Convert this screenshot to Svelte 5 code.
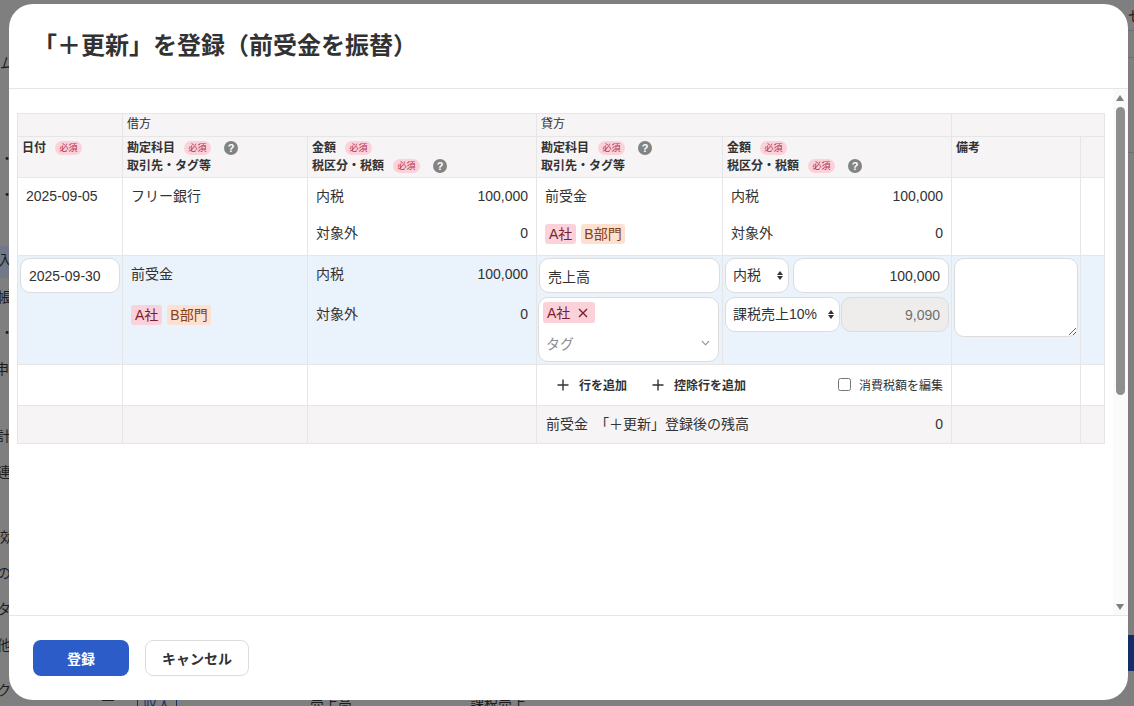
<script>
  const bgBits = [
    { t: 'ム', x: 0, y: 53 }, { t: '・', x: 0, y: 148 }, { t: '・', x: 0, y: 184 },
    { t: '入', x: -2, y: 250 }, { t: '帳', x: -3, y: 287 }, { t: '・', x: 0, y: 322 },
    { t: '申', x: -5, y: 359 }, { t: '計', x: -3, y: 426 }, { t: '連', x: -3, y: 462 },
    { t: '効', x: 0, y: 527 }, { t: 'の', x: -3, y: 563 }, { t: 'タ', x: -3, y: 599 },
    { t: '他', x: -3, y: 635 }, { t: 'ク', x: -3, y: 680 }, { t: 'セ', x: 1128, y: 6 }
  ];
</script>

{#snippet must()}<span class="must">必須</span>{/snippet}
{#snippet help()}<span class="help">?</span>{/snippet}

<div class="page">
  <div class="backdrop">
    <div class="bg-active"></div>
    <div class="bg-blue"></div>
    <div class="bg-rule r-a"></div>
    <div class="bg-rule r-b"></div>
    <div class="bg-rule r-c"></div>
    {#each bgBits as b}
      <span class="bg-bit" style="left:{b.x}px;top:{b.y}px">{b.t}</span>
    {/each}
    <div class="bg-bottom">
      <span class="bg-check"></span>
      <span class="bg-tab">収入</span><span class="bg-a">売上高</span><span class="bg-b">課税売上</span>
    </div>
  </div>

  <div class="modal">
    <header><h1>「＋更新」を登録（前受金を振替）</h1></header>

    <div class="body">
      <table>
        <colgroup>
          <col style="width:105px" /><col style="width:185px" /><col style="width:229px" />
          <col style="width:186px" /><col style="width:229px" /><col style="width:129px" /><col style="width:24px" />
        </colgroup>
        <thead>
          <tr class="h1">
            <th></th>
            <th colspan="2">借方</th>
            <th colspan="2">貸方</th>
            <th colspan="2"></th>
          </tr>
          <tr class="h2">
            <th><div class="hl b">日付{@render must()}</div></th>
            <th>
              <div class="hl b">勘定科目{@render must()}{@render help()}</div>
              <div class="hl b">取引先・タグ等</div>
            </th>
            <th>
              <div class="hl b">金額{@render must()}</div>
              <div class="hl b">税区分・税額{@render must()}{@render help()}</div>
            </th>
            <th>
              <div class="hl b">勘定科目{@render must()}{@render help()}</div>
              <div class="hl b">取引先・タグ等</div>
            </th>
            <th>
              <div class="hl b">金額{@render must()}</div>
              <div class="hl b">税区分・税額{@render must()}{@render help()}</div>
            </th>
            <th><div class="hl b">備考</div></th>
            <th></th>
          </tr>
        </thead>
        <tbody>
          <tr class="r1">
            <td class="pl8"><div class="line">2025-09-05</div></td>
            <td class="pl8"><div class="line">フリー銀行</div></td>
            <td class="amt">
              <div class="line sb"><span>内税</span><span>100,000</span></div>
              <div class="line sb"><span>対象外</span><span>0</span></div>
            </td>
            <td class="pl8">
              <div class="line">前受金</div>
              <div class="line"><span class="tag red">A社</span><span class="tag orange">B部門</span></div>
            </td>
            <td class="amt">
              <div class="line sb"><span>内税</span><span>100,000</span></div>
              <div class="line sb"><span>対象外</span><span>0</span></div>
            </td>
            <td></td><td></td>
          </tr>
          <tr class="r2">
            <td class="form"><input class="field date" value="2025-09-30" /></td>
            <td class="debit">
              <div class="line">前受金</div>
              <div class="line"><span class="tag red">A社</span><span class="tag orange">B部門</span></div>
            </td>
            <td class="amt debit-amt">
              <div class="line sb"><span>内税</span><span>100,000</span></div>
              <div class="line sb"><span>対象外</span><span>0</span></div>
            </td>
            <td class="form acct">
              <input class="field name" value="売上高" />
              <div class="tagbox">
                <span class="tag red big">A社<svg viewBox="0 0 10 10" width="10" height="10"><path d="M1 1l8 8M9 1l-8 8" stroke="#7a1f2e" stroke-width="1.4" fill="none" /></svg></span>
                <div class="tagrow">
                  <span class="ph">タグ</span>
                  <svg viewBox="0 0 10 6" width="9" height="6"><path d="M1 1l4 4 4-4" stroke="#8a8a8a" stroke-width="1.2" fill="none" /></svg>
                </div>
              </div>
            </td>
            <td class="form tax">
              <div class="taxrow first">
                <div class="sel s1">内税<span class="arrows"></span></div>
                <input class="field money" value="100,000" />
              </div>
              <div class="taxrow">
                <div class="sel s2">課税売上10%<span class="arrows"></span></div>
                <input class="field money ro" value="9,090" readonly />
              </div>
            </td>
            <td class="form note"><textarea></textarea></td>
            <td></td>
          </tr>
          <tr class="r3">
            <td></td><td></td><td></td>
            <td colspan="2">
              <div class="actions">
                <span class="act"><svg viewBox="0 0 12 12" width="12" height="12"><path d="M6 0.5v11M0.5 6h11" stroke="#333" stroke-width="1.4" /></svg>行を追加</span>
                <span class="act"><svg viewBox="0 0 12 12" width="12" height="12"><path d="M6 0.5v11M0.5 6h11" stroke="#333" stroke-width="1.4" /></svg>控除行を追加</span>
                <label class="edit"><input type="checkbox" />消費税額を編集</label>
              </div>
            </td>
            <td></td><td></td>
          </tr>
          <tr class="r4">
            <td></td><td></td><td></td>
            <td colspan="2"><div class="bal"><span>前受金　「＋更新」登録後の残高</span><span>0</span></div></td>
            <td></td><td></td>
          </tr>
        </tbody>
      </table>

      <div class="scroll">
        <span class="up"></span>
        <span class="thumb"></span>
        <span class="down"></span>
      </div>
    </div>

    <footer>
      <button class="primary">登録</button>
      <button class="ghost">キャンセル</button>
    </footer>
  </div>
</div>

<style>
  :global(body) { margin: 0; font-family: "Liberation Sans", "Noto Sans CJK JP", sans-serif; color: #323232; }
  .page { position: relative; width: 1134px; height: 706px; overflow: hidden; }
  .backdrop { position: absolute; inset: 0; background: #7f7f7f; }
  .bg-bit { position: absolute; font-size: 14px; line-height: 20px; color: #1c1c1c; }
  .bg-active { position: absolute; left: 0; top: 246px; width: 9px; height: 32px; background: #70788a; }
  .bg-blue { position: absolute; left: 1128px; top: 635px; width: 6px; height: 36px; background: #142c68; }
  .bg-rule { position: absolute; left: 1128px; width: 6px; height: 1px; background: #6e6e6e; }
  .r-a { top: 30px; }
  .r-b { top: 57px; }
  .r-c { top: 152px; }
  .bg-bottom { position: absolute; left: 0; top: 695px; font-size: 14px; color: #1c1c1c; }
  .bg-check { position: absolute; left: 101px; top: -6px; width: 12px; height: 10px; border: 1px solid #1c1c1c; border-radius: 2px; }
  .bg-tab { position: absolute; left: 137px; top: -2px; box-sizing: border-box; width: 40px; height: 16px; border-left: 1px solid #16306e; border-right: 1px solid #16306e; text-align: center; color: #16306e; white-space: nowrap; }
  .bg-a { position: absolute; left: 310px; top: -3px; white-space: nowrap; }
  .bg-b { position: absolute; left: 470px; top: -3px; white-space: nowrap; }

  .modal { position: absolute; left: 9px; top: 4px; width: 1119px; height: 696px; background: #fff; border-radius: 24px; display: flex; flex-direction: column; overflow: hidden; }
  header { height: 85px; box-sizing: border-box; border-bottom: 1px solid #e6e6e6; padding: 27px 0 0 24px; flex: none; }
  h1 { margin: 0; font-size: 24px; line-height: 30px; font-weight: 700; color: #323232; }

  .body { position: relative; flex: 1; padding: 24px 0 0 8px; min-height: 0; }
  table { border-collapse: collapse; table-layout: fixed; width: 1087px; font-size: 14px; }
  th, td { box-sizing: border-box; border: 1px solid #e6e6e6; padding: 0; vertical-align: top; text-align: left; }
  thead th { background: #f6f4f4; font-weight: 400; font-size: 12px; }
  .h1 th { height: 23px; padding: 0 4px; line-height: 21px; }
  .h2 th { height: 41px; padding: 2px 4px 0; }
  .hl { height: 18px; line-height: 19px; display: flex; align-items: center; white-space: nowrap; }
  .b { font-weight: 700; color: #323232; }
  .must { display: inline-block; width: 27px; height: 14px; line-height: 14px; border-radius: 7px; background: #fbd2da; color: #b2304e; font-size: 9px; font-weight: 400; text-align: center; margin-left: 9px; }
  .help { display: inline-block; width: 14px; height: 14px; line-height: 14px; border-radius: 50%; background: #838383; color: #fff; font-size: 11px; font-weight: 700; text-align: center; margin-left: 13px; }

  .line { height: 37px; line-height: 37px; white-space: nowrap; }
  .sb { display: flex; justify-content: space-between; }
  .r1 td { height: 78px; }
  .pl8 { padding-left: 8px; }
  .amt { padding: 0 8px 0 8px; }
  .tag { display: inline-block; height: 20px; line-height: 20px; padding: 0 3.5px; border-radius: 3px; font-size: 14px; vertical-align: middle; }
  .tag.red { background: #fbd2da; color: #7a1f2e; padding: 0 4px; }
  .tag.orange { background: #fde0cf; color: #85401a; margin-left: 4.5px; }
  .tag.big { display: inline-flex; align-items: center; gap: 8px; padding: 0 7px 0 4px; height: 21px; }

  .r2 td { background: #eaf2fc; height: 109px; }
  .field { box-sizing: border-box; border: 1px solid #dcdcdc; border-radius: 10px; background: #fff; height: 35px; font: inherit; color: #323232; padding: 0 8px; outline: none; display: block; }
  .form { padding: 2px 2px; }
  .date { width: 100px; }
  .debit { padding-left: 8px; }
  .debit .line:first-child { height: 36px; }
  .debit .line + .line { height: 44px; line-height: 45px; }
  .debit-amt .line:first-child { height: 36px; }
  .debit-amt .line + .line { height: 44px; line-height: 45px; }
  .acct { padding: 2px 1px 0; }
  .name { width: 181px; margin-left: 1px; }
  .tagbox { box-sizing: border-box; width: 181px; height: 65px; margin-top: 4px; background: #fff; border: 1px solid #dcdcdc; border-radius: 10px; padding: 4px 4px; }
  .tagrow { display: flex; justify-content: space-between; align-items: center; padding: 0 4px 0 3px; margin-top: 10px; }
  .ph { color: #8e8e8e; }
  .tax { padding: 2px 2px 0; }
  .taxrow { display: flex; gap: 4px; }
  .taxrow.first { margin-bottom: 4px; }
  .taxrow.first .money { width: 156px; }
  .taxrow + .taxrow { gap: 1px; }
  .taxrow + .taxrow .money { width: 108px; }
  .money { text-align: right; }
  .ro { background: #eeedeb; color: #6f6f6f; }
  .sel { position: relative; box-sizing: border-box; height: 35px; line-height: 33px; background: #fff; border: 1px solid #dcdcdc; border-radius: 10px; padding-left: 7px; flex: none; }
  .s1 { width: 64px; }
  .s2 { width: 115px; }
  .arrows { position: absolute; right: 5px; top: 12px; width: 0; height: 0; border-left: 3px solid transparent; border-right: 3px solid transparent; border-bottom: 4px solid #333; }
  .arrows::after { content: ""; position: absolute; left: -3px; top: 5px; width: 0; height: 0; border-left: 3px solid transparent; border-right: 3px solid transparent; border-top: 4px solid #333; }
  textarea { box-sizing: border-box; display: block; width: 124px; height: 79px; border: 1px solid #dcdcdc; border-radius: 10px; background: #fff; outline: none; }
  .note { padding: 2px 2px 0; }

  .r3 td { height: 41px; }
  .actions { display: flex; align-items: center; height: 39px; padding: 0 8px 0 20px; font-size: 12px; }
  .act { display: flex; align-items: center; gap: 10px; font-weight: 700; margin-right: 25px; }
  .edit { margin-left: auto; display: flex; align-items: center; gap: 8px; font-size: 12px; }
  .edit input { margin: 0; width: 13px; height: 13px; }
  .r4 td { background: #f6f4f4; height: 38px; }
  .bal { display: flex; justify-content: space-between; line-height: 37px; padding: 0 8px 0 9px; }

  .scroll { position: absolute; right: 0; top: 0; bottom: 0; width: 15px; background: #fafafa; }
  .up, .down { position: absolute; left: 3px; width: 0; height: 0; border-left: 4.5px solid transparent; border-right: 4.5px solid transparent; }
  .up { top: 6px; border-bottom: 6px solid #7f7f7f; }
  .down { bottom: 5px; border-top: 6px solid #7f7f7f; }
  .thumb { position: absolute; left: 3px; top: 18px; width: 9px; height: 288px; border-radius: 5px; background: #8e8e8e; }

  footer { height: 85px; flex: none; box-sizing: border-box; border-top: 1px solid #e6e6e6; padding: 24px 0 0 24px; display: flex; gap: 16px; align-items: flex-start; }
  button { height: 36px; border-radius: 8px; font: inherit; font-size: 14px; font-weight: 700; cursor: pointer; padding: 0; }
  .primary { width: 96px; background: #2b5cc8; color: #fff; border: 0; }
  .ghost { width: 104px; background: #fff; color: #323232; border: 1px solid #dcdcdc; }
</style>
